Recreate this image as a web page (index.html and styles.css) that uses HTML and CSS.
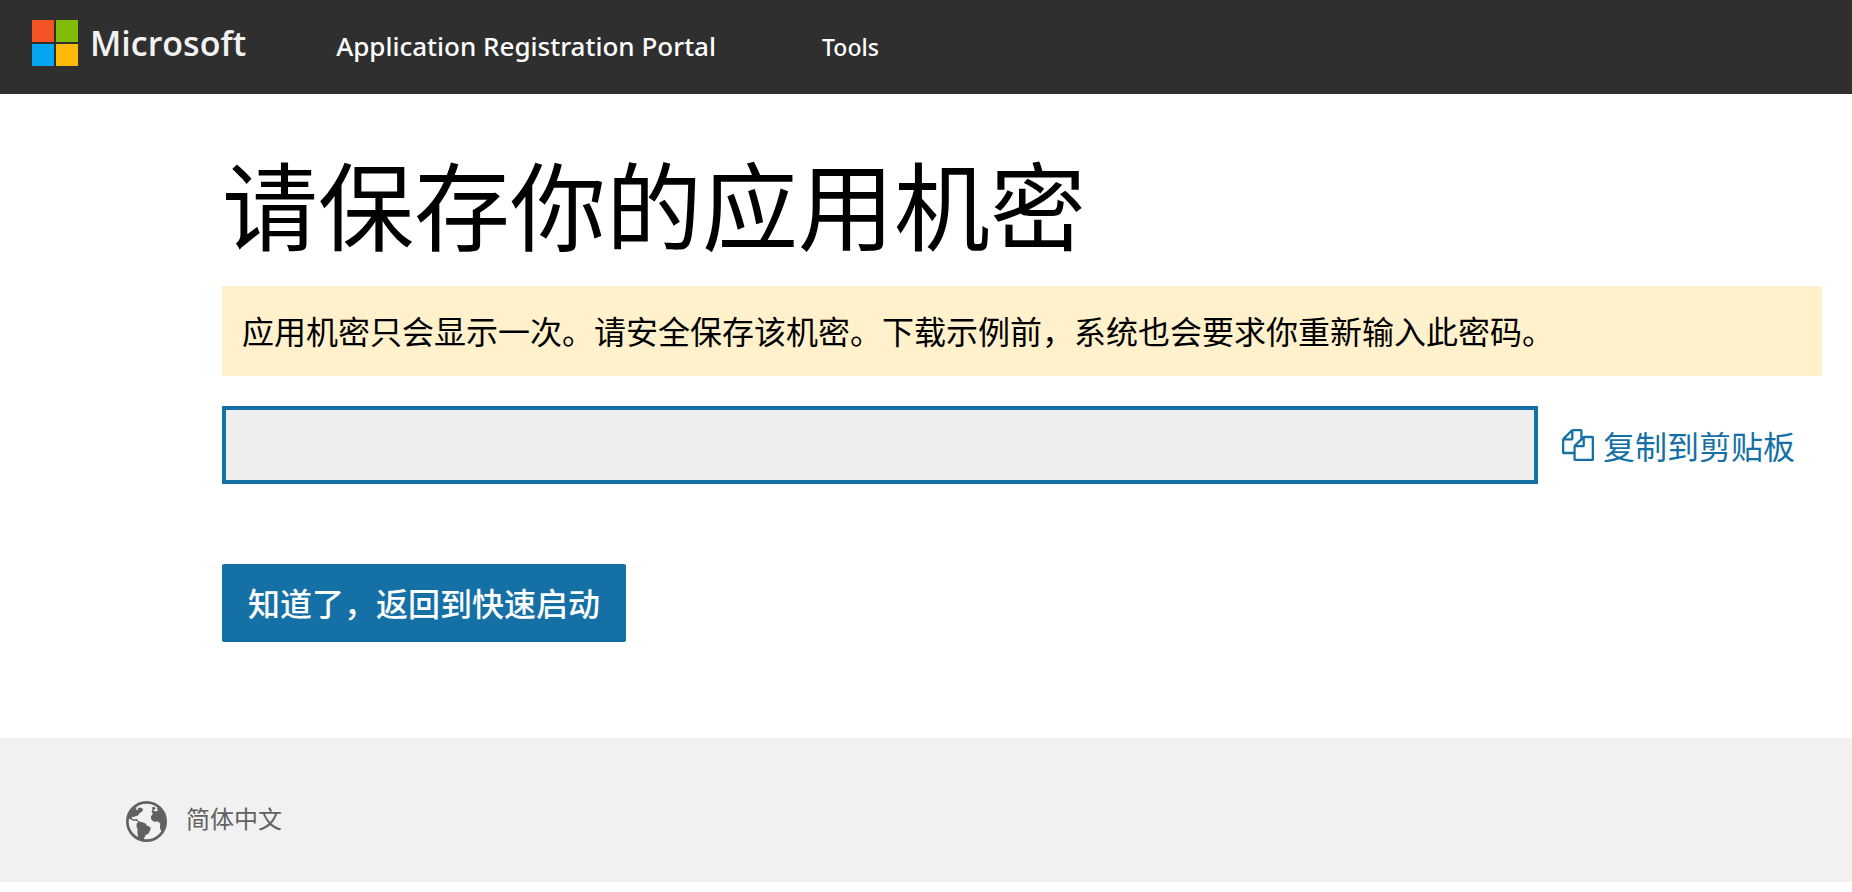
FILE: index.html
```html
<!DOCTYPE html>
<html lang="zh-CN">
<head>
<meta charset="utf-8">
<meta name="viewport" content="width=device-width, initial-scale=1">
<title>Application Registration Portal</title>
<link rel="stylesheet" href="styles.css">
</head>
<body>
<header class="topbar">
  <a class="brand" href="#">
    <svg class="brand-mark" viewBox="0 0 46 46" aria-hidden="true">
      <path fill="#f35325" d="M0 0h22v22H0z"/>
      <path fill="#81bc06" d="M24 0h22v22H24z"/>
      <path fill="#05a6f0" d="M0 24h22v22H0z"/>
      <path fill="#ffba08" d="M24 24h22v22H24z"/>
    </svg>
    <span class="brand-name">Microsoft</span>
  </a>
  <nav class="menu">
    <a class="portal" href="#">Application Registration Portal</a>
    <a class="menu-link" href="#">Tools</a>
  </nav>
</header>

<main class="content">
  <h1 class="title">请保存你的应用机密</h1>
  <p class="notice">应用机密只会显示一次。请安全保存该机密。下载示例前，系统也会要求你重新输入此密码。</p>
  <div class="secret-row">
    <input class="secret" type="text" aria-label="应用机密" readonly>
    <button class="copy" type="button">
      <svg class="copy-icon" viewBox="0 0 1792 1792" aria-hidden="true"><path fill="currentColor" d="M1696 384q40 0 68 28t28 68v1216q0 40-28 68t-68 28h-960q-40 0-68-28t-28-68v-288h-544q-40 0-68-28t-28-68v-672q0-40 20-88t48-76l408-408q28-28 76-48t88-20h416q40 0 68 28t28 68v328q68-40 128-40h416zm-544 213l-299 299h299v-299zm-640-384l-299 299h299v-299zm196 647l316-316v-416h-384v416q0 40-28 68t-68 28h-416v640h512v-256q0-40 20-88t48-76zm956 804v-1152h-384v416q0 40-28 68t-68 28h-416v640h896z"/></svg>
      <span>复制到剪贴板</span>
    </button>
  </div>
  <button class="confirm" type="button">知道了，返回到快速启动</button>
</main>

<footer class="footer">
  <a class="language" href="#">
    <svg class="globe" viewBox="0 0 122 122" aria-hidden="true">
      <circle cx="61" cy="61" r="57" fill="none" stroke="currentColor" stroke-width="8"/>
      <path fill="currentColor" d="M8 48 14 32 26 20 32 19 29 25 36 27 36 20 46 20 51 25 48 31 41 36 35 44 28 45 24 48 19 46 17 52 25 55 32 53 34 57 42 62 40 64 30 59 22 59 9 52Z"/>
      <path fill="currentColor" d="M32 67 38 62 49 63 58 67 62 73 73 78 73 85 67 97 58 102 52 115 36 110 34 92 34 82 31 75Z"/>
      <path fill="currentColor" d="M79 26 77 19 84 17 88 22 81 29 90 31 96 27 91 23 95 19 106 28 116 44 119 62 115 80 105 90 101 80 102 67 95 61 83 62 75 55 74 46 80 38 76 32Z"/>
    </svg>
    <span class="language-name">简体中文</span>
  </a>
</footer>
</body>
</html>
```
FILE: styles.css
```css
* {
  box-sizing: border-box;
}

body {
  margin: 0;
  background: #fff;
  color: #000;
  font-family: "Noto Sans", "Open Sans", "Noto Sans CJK SC", sans-serif;
  font-size: 32px;
}

a {
  color: inherit;
  text-decoration: none;
}

button {
  border: 0;
  font: inherit;
  cursor: pointer;
}

.topbar {
  display: flex;
  align-items: center;
  min-height: 94px;
  padding: 0 32px;
  background: #2f2f2f;
  color: #fff;
}

.brand {
  display: flex;
  align-items: center;
  gap: 12px;
  padding-bottom: 8px;
  color: #f2f2f2;
  font-family: "Open Sans", sans-serif;
}

.brand-mark {
  width: 46px;
  height: 46px;
}

.brand-name {
  font-size: 34px;
  font-weight: 600;
  line-height: 48px;
}

.menu {
  display: flex;
  align-items: baseline;
  gap: 106px;
  margin-left: 90px;
  padding-bottom: 2px;
  font-weight: 500;
}

.portal {
  font-size: 26px;
}

.menu-link {
  font-size: 23px;
}

.content {
  padding: 60px 30px 96px 222px;
  font-family: "Noto Sans CJK SC", sans-serif;
}

.title {
  margin: 0 0 36px;
  font-size: 96px;
  font-weight: 400;
  line-height: 96px;
}

.notice {
  margin: 0 0 30px;
  padding: 20px 20px 22px;
  background: #fff1cc;
  line-height: 48px;
}

.secret-row {
  display: flex;
  align-items: center;
  gap: 24px;
  margin-bottom: 80px;
}

.secret {
  flex: 1;
  min-width: 0;
  height: 78px;
  padding: 0 20px;
  border: 4px solid #1570a6;
  border-radius: 0;
  background: #eee;
  font: inherit;
  outline: 0;
}

.copy {
  display: flex;
  align-items: center;
  gap: 9px;
  padding: 0 27px 0 0;
  background: none;
  color: #1570a6;
}

.copy-icon {
  width: 32px;
  height: 32px;
}

.confirm {
  display: block;
  padding: 14px 26px 16px;
  border-radius: 2px;
  background: #1570a6;
  color: #fff;
  font-weight: 500;
  line-height: 48px;
}

.footer {
  display: flex;
  padding: 55px 126px 33px;
  background: #f1f1f1;
  color: #616161;
  font-family: "Noto Sans CJK SC", sans-serif;
  font-size: 24px;
}

.language {
  display: flex;
  align-items: center;
  gap: 19px;
  min-height: 56px;
}

.language-name {
  padding-bottom: 8px;
}

.globe {
  width: 41px;
  height: 41px;
}
```
